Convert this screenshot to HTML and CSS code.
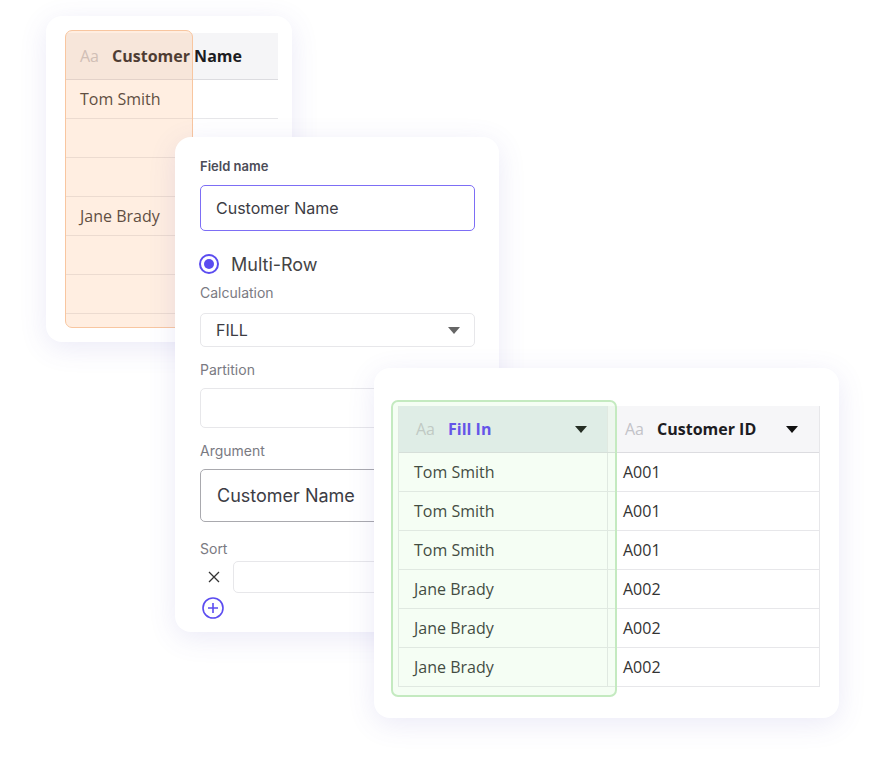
FILE: index.html
```html
<!DOCTYPE html>
<html lang="en">
<head>
<meta charset="UTF-8">
<meta name="viewport" content="width=device-width,initial-scale=1">
<title>Multi-Row Fill</title>
<link rel="stylesheet" href="styles.css">
</head>
<body>
<div class="stage">

  <section class="card card-source">
    <div class="grid grid-source">
      <div class="row head"><span class="aa">Aa</span><b>Customer Name</b></div>
      <div class="row">Tom Smith</div>
      <div class="row"></div>
      <div class="row"></div>
      <div class="row">Jane Brady</div>
      <div class="row"></div>
      <div class="row"></div>
      <div class="row"></div>
    </div>
    <div class="highlight orange"></div>
  </section>

  <section class="card card-form">
    <div class="label strong">Field name</div>
    <div class="input focus">Customer Name</div>

    <div class="radio-row">
      <span class="radio"><span class="dot"></span></span>
      <span>Multi-Row</span>
    </div>

    <div class="label">Calculation</div>
    <div class="input select">
      <span>FILL</span>
      <svg width="12" height="7" viewBox="0 0 12 7"><path d="M0 0h12L6 7z" fill="#666"/></svg>
    </div>

    <div class="label">Partition</div>
    <div class="input partition"></div>

    <div class="label">Argument</div>
    <div class="input argument">Customer Name</div>

    <div class="label sort-label">Sort</div>
    <div class="sort-row">
      <svg class="x" width="12" height="12" viewBox="0 0 12 12"><path d="M1 1l10 10M11 1L1 11" stroke="#333" stroke-width="1.3"/></svg>
      <div class="input sort"></div>
    </div>
    <svg class="add" width="24" height="24" viewBox="0 0 24 24">
      <circle cx="12" cy="12" r="10" fill="none" stroke="#5b4cf0" stroke-width="1.6"/>
      <path d="M12 7v10M7 12h10" stroke="#5b4cf0" stroke-width="1.6"/>
    </svg>
  </section>

  <section class="card card-result">
    <div class="grid grid-result">
      <div class="row head">
        <div class="cell c1 active"><span class="aa">Aa</span><b class="purple">Fill In</b><i class="caret"></i></div>
        <div class="cell c2"><span class="aa">Aa</span><b>Customer ID</b><i class="caret"></i></div>
      </div>
      <div class="row"><div class="cell c1">Tom Smith</div><div class="cell c2">A001</div></div>
      <div class="row"><div class="cell c1">Tom Smith</div><div class="cell c2">A001</div></div>
      <div class="row"><div class="cell c1">Tom Smith</div><div class="cell c2">A001</div></div>
      <div class="row"><div class="cell c1">Jane Brady</div><div class="cell c2">A002</div></div>
      <div class="row"><div class="cell c1">Jane Brady</div><div class="cell c2">A002</div></div>
      <div class="row"><div class="cell c1">Jane Brady</div><div class="cell c2">A002</div></div>
    </div>
    <div class="highlight green"></div>
  </section>

</div>
</body>
</html>
```

FILE: styles.css
```css
:root {
  --purple: #5b4cf0;
  --line: #e7e7ea;
  --text: #333;
  --label: #7a7a82;
  --shadow: 0 6px 28px rgba(90, 80, 190, 0.12);
}
body { margin: 0; background: #fff; font-family: 'Open Sans', 'Noto Sans', sans-serif; color: var(--text); }
.stage { position: relative; width: 870px; height: 779px; overflow: hidden; }

.card {
  position: absolute;
  background: #fff;
  border-radius: 16px;
  box-shadow: var(--shadow);
  box-sizing: border-box;
}

/* back card: source column */
.card-source { left: 46px; top: 16px; width: 246px; height: 326px; padding: 17px 0 0 20px; }
.grid-source { width: 212px; height: 295px; overflow: hidden; }
.grid-source .row {
  height: 38px; border-bottom: 1px solid var(--line);
  display: flex; align-items: center; padding-left: 14px;
  font-size: 16px; white-space: nowrap;
}
.grid-source .row.head { height: 46px; background: #f5f5f7; border-bottom-color: #dcdce0; }

.aa { color: #c3c3c8; font-size: 16px; margin-right: 13px; font-weight: 400; }
.row.head b { font-weight: 700; font-size: 16px; color: #1c1c22; }
.row.head b.purple { color: #5a3df2; }

.highlight { position: absolute; border-radius: 7px; box-sizing: border-box; pointer-events: none; }
.highlight.orange { left: 19px; top: 14px; width: 128px; height: 298px; background: rgba(255, 178, 120, 0.22); border: 1.5px solid #f8c6a0; }
.highlight.green { left: 17px; top: 32px; width: 226px; height: 297px; background: rgba(180, 245, 170, 0.13); border: 2px solid #c4eac0; }

/* middle card: form */
.card-form {
  left: 175px; top: 137px; width: 324px; height: 495px;
  padding: 21px 24px 0 25px;
  font-family: Inter, 'Noto Sans', sans-serif;
}
.label { font-size: 14px; line-height: 18px; color: var(--label); margin: 14px 0 9px; }
.label.strong { font-size: 13px; line-height: 16px; font-weight: 600; color: #4c4c57; margin: 0 0 11px; }
.input {
  box-sizing: border-box; width: 275px; border: 1px solid var(--line); border-radius: 5px;
  display: flex; align-items: center; padding: 0 15px; font-size: 16px; color: #3c3c44;
}
.input.focus { height: 46px; border: 1.5px solid #7d6ef5; }
.input.select { height: 34px; justify-content: space-between; padding-right: 14px; }
.input.partition { height: 40px; }
.input.argument { height: 53px; border-color: #a9a9ae; font-size: 18px; padding-left: 16px; }
.label + .input.argument { margin-top: 8px; }

.radio-row { display: flex; align-items: center; gap: 12px; height: 24px; margin: 21px 0 8px -1px; font-size: 18px; color: #444; }
.radio { width: 16px; height: 16px; border: 2px solid var(--purple); border-radius: 50%; display: flex; align-items: center; justify-content: center; }
.radio .dot { width: 10px; height: 10px; border-radius: 50%; background: var(--purple); }
.radio-row + .label { margin-top: 8px; margin-bottom: 11px; }

.label.sort-label { margin-top: 18px; margin-bottom: 3px; }
.sort-row { display: flex; align-items: center; gap: 13px; padding-left: 8px; }
.input.sort { height: 32px; flex: 1; width: auto; margin-right: -60px; }
.add { display: block; margin: 3px 0 0 1px; }

/* front card: result table */
.card-result { left: 374px; top: 368px; width: 465px; height: 350px; padding: 38px 0 0 24px; }
.grid-result { width: 420px; border-left: 1px solid var(--line); border-right: 1px solid var(--line); }
.grid-result .row { display: flex; height: 38px; border-bottom: 1px solid var(--line); font-size: 16px; }
.grid-result .row.head { height: 46px; border-bottom-color: #dcdce0; background: #f6f6f8; }
.grid-result .cell { display: flex; align-items: center; padding-left: 15px; box-sizing: border-box; }
.grid-result .c1 { width: 209px; border-right: 1px solid var(--line); }
.grid-result .c2 { flex: 1; }
.grid-result .head .cell { padding: 0 20px 0 17px; }
.grid-result .head .c1.active { background: #e6ecef; }
.grid-result .head .c2 { padding-right: 21px; }
.caret { margin-left: auto; width: 0; height: 0; border-left: 6px solid transparent; border-right: 6px solid transparent; border-top: 7px solid #111; }
```
